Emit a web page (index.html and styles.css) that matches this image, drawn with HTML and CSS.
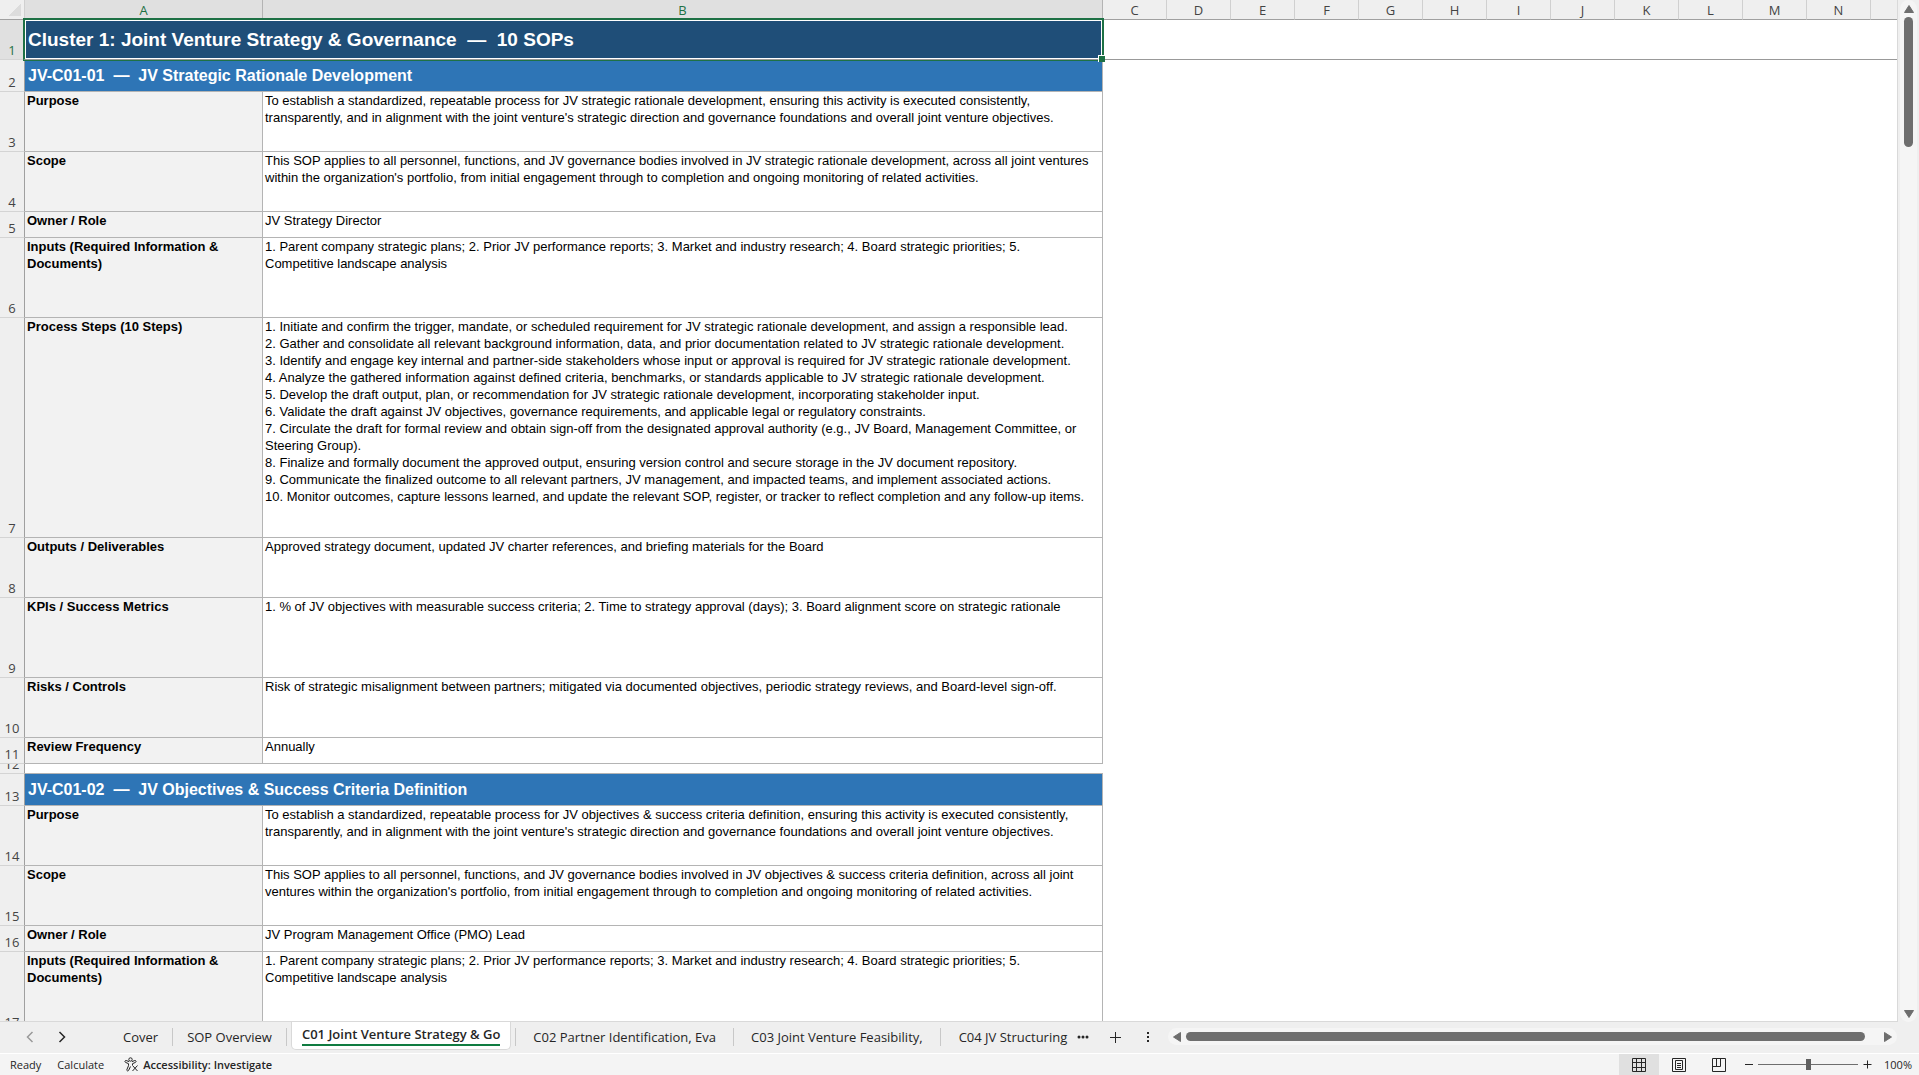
FILE: index.html
```
<!DOCTYPE html>
<html lang="en">

<head>
    <meta charset="UTF-8">
    <title>JV SOP Workbook</title>
    <link rel="stylesheet" href="styles.css">
</head>

<body>
    <main class="workspace">
        <div class="sheet">
            <table class="grid">
                <colgroup>
                    <col class="col-index">
                    <col class="col-a">
                    <col class="col-b">
                    <col class="col-std" span="12">
                    <col>
                </colgroup>
                <thead>
                    <tr>
                        <th class="corner"></th>
                        <th class="selected">A</th>
                        <th class="selected">B</th>
                        <th>C</th>
                        <th>D</th>
                        <th>E</th>
                        <th>F</th>
                        <th>G</th>
                        <th>H</th>
                        <th>I</th>
                        <th>J</th>
                        <th>K</th>
                        <th>L</th>
                        <th>M</th>
                        <th>N</th>
                        <th></th>
                    </tr>
                </thead>
                <tbody>
                    <tr class="row-title">
                        <th class="selected"><div>1</div></th>
                        <td class="cluster" colspan="2">Cluster 1: Joint Venture Strategy &amp; Governance&nbsp; —&nbsp; 10 SOPs</td>
                        <td class="blank" colspan="13"></td>
                    </tr>
                    <tr class="row-sop">
                        <th><div>2</div></th>
                        <td class="sop" colspan="2">JV-C01-01&nbsp; —&nbsp; JV Strategic Rationale Development</td>
                    </tr>
                    <tr class="row-3">
                        <th><div>3</div></th>
                        <td class="label">Purpose</td>
                        <td>To establish a standardized, repeatable process for JV strategic rationale development, ensuring this activity is executed consistently,<br>transparently, and in alignment with the joint venture's strategic direction and governance foundations and overall joint venture objectives.</td>
                    </tr>
                    <tr class="row-3">
                        <th><div>4</div></th>
                        <td class="label">Scope</td>
                        <td>This SOP applies to all personnel, functions, and JV governance bodies involved in JV strategic rationale development, across all joint ventures<br>within the organization's portfolio, from initial engagement through to completion and ongoing monitoring of related activities.</td>
                    </tr>
                    <tr class="row-1">
                        <th><div>5</div></th>
                        <td class="label">Owner / Role</td>
                        <td>JV Strategy Director</td>
                    </tr>
                    <tr class="row-4">
                        <th><div>6</div></th>
                        <td class="label">Inputs (Required Information &amp;<br>Documents)</td>
                        <td>1. Parent company strategic plans; 2. Prior JV performance reports; 3. Market and industry research; 4. Board strategic priorities; 5.<br>Competitive landscape analysis</td>
                    </tr>
                    <tr class="row-steps">
                        <th><div>7</div></th>
                        <td class="label">Process Steps (10 Steps)</td>
                        <td>1. Initiate and confirm the trigger, mandate, or scheduled requirement for JV strategic rationale development, and assign a responsible lead.<br>
                            2. Gather and consolidate all relevant background information, data, and prior documentation related to JV strategic rationale development.<br>
                            3. Identify and engage key internal and partner-side stakeholders whose input or approval is required for JV strategic rationale development.<br>
                            4. Analyze the gathered information against defined criteria, benchmarks, or standards applicable to JV strategic rationale development.<br>
                            5. Develop the draft output, plan, or recommendation for JV strategic rationale development, incorporating stakeholder input.<br>
                            6. Validate the draft against JV objectives, governance requirements, and applicable legal or regulatory constraints.<br>
                            7. Circulate the draft for formal review and obtain sign-off from the designated approval authority (e.g., JV Board, Management Committee, or<br>
                            Steering Group).<br>
                            8. Finalize and formally document the approved output, ensuring version control and secure storage in the JV document repository.<br>
                            9. Communicate the finalized outcome to all relevant partners, JV management, and impacted teams, and implement associated actions.<br>
                            10. Monitor outcomes, capture lessons learned, and update the relevant SOP, register, or tracker to reflect completion and any follow-up items.</td>
                    </tr>
                    <tr class="row-3">
                        <th><div>8</div></th>
                        <td class="label">Outputs / Deliverables</td>
                        <td>Approved strategy document, updated JV charter references, and briefing materials for the Board</td>
                    </tr>
                    <tr class="row-4">
                        <th><div>9</div></th>
                        <td class="label">KPIs / Success Metrics</td>
                        <td>1. % of JV objectives with measurable success criteria; 2. Time to strategy approval (days); 3. Board alignment score on strategic rationale</td>
                    </tr>
                    <tr class="row-3">
                        <th><div>10</div></th>
                        <td class="label">Risks / Controls</td>
                        <td>Risk of strategic misalignment between partners; mitigated via documented objectives, periodic strategy reviews, and Board-level sign-off.</td>
                    </tr>
                    <tr class="row-1">
                        <th><div>11</div></th>
                        <td class="label">Review Frequency</td>
                        <td>Annually</td>
                    </tr>
                    <tr class="row-gap">
                        <th><div>12</div></th>
                        <td class="spacer" colspan="2"></td>
                    </tr>
                    <tr class="row-sop">
                        <th><div>13</div></th>
                        <td class="sop" colspan="2">JV-C01-02&nbsp; —&nbsp; JV Objectives &amp; Success Criteria Definition</td>
                    </tr>
                    <tr class="row-3">
                        <th><div>14</div></th>
                        <td class="label">Purpose</td>
                        <td>To establish a standardized, repeatable process for JV objectives &amp; success criteria definition, ensuring this activity is executed consistently,<br>transparently, and in alignment with the joint venture's strategic direction and governance foundations and overall joint venture objectives.</td>
                    </tr>
                    <tr class="row-3">
                        <th><div>15</div></th>
                        <td class="label">Scope</td>
                        <td>This SOP applies to all personnel, functions, and JV governance bodies involved in JV objectives &amp; success criteria definition, across all joint<br>ventures within the organization's portfolio, from initial engagement through to completion and ongoing monitoring of related activities.</td>
                    </tr>
                    <tr class="row-1">
                        <th><div>16</div></th>
                        <td class="label">Owner / Role</td>
                        <td>JV Program Management Office (PMO) Lead</td>
                    </tr>
                    <tr class="row-4">
                        <th><div>17</div></th>
                        <td class="label">Inputs (Required Information &amp;<br>Documents)</td>
                        <td>1. Parent company strategic plans; 2. Prior JV performance reports; 3. Market and industry research; 4. Board strategic priorities; 5.<br>Competitive landscape analysis</td>
                    </tr>
                </tbody>
            </table>
        </div>
        <div class="scroll scroll-v">
            <button class="arrow" aria-label="Scroll up"><svg width="10" height="8"><path d="M5 0.5 9.5 7.5H0.5z" /></svg></button>
            <div class="thumb"></div>
            <button class="arrow arrow-end" aria-label="Scroll down"><svg width="10" height="8"><path d="M5 7.5 9.5 0.5H0.5z" /></svg></button>
        </div>
    </main>

    <nav class="tabbar">
        <div class="tabs">
            <button class="nav-arrow off" aria-label="Previous sheets"><svg width="8" height="12"><path d="M6.5 1 1.5 6l5 5" /></svg></button>
            <button class="nav-arrow" aria-label="Next sheets"><svg width="8" height="12"><path d="M1.5 1l5 5-5 5" /></svg></button>
            <button class="tab first">Cover</button>
            <button class="tab">SOP Overview</button>
            <button class="tab active"><span>C01 Joint Venture Strategy &amp; Go</span></button>
            <button class="tab wide lined">C02 Partner Identification, Eva</button>
            <button class="tab wide">C03 Joint Venture Feasibility,</button>
            <button class="tab last">C04 JV Structuring</button>
            <button class="more" aria-label="More sheets"><svg width="12" height="4"><circle cx="2" cy="2" r="1.5" /><circle cx="6" cy="2" r="1.5" /><circle cx="10" cy="2" r="1.5" /></svg></button>
            <button class="add" aria-label="New sheet"><svg width="13" height="13"><path d="M6.5 1v11M1 6.5h11" /></svg></button>
            <button class="resize" aria-label="Resize tabs"><svg width="4" height="12"><path d="M1 1h2v2H1zM1 5h2v2H1zM1 9h2v2H1z" /></svg></button>
        </div>
        <div class="scroll scroll-h">
            <button class="arrow" aria-label="Scroll left"><svg width="8" height="10"><path d="M0.5 5 7.5 0.5v9z" /></svg></button>
            <div class="thumb"></div>
            <button class="arrow arrow-end" aria-label="Scroll right"><svg width="8" height="10"><path d="M7.5 5 0.5 0.5v9z" /></svg></button>
        </div>
    </nav>

    <footer class="status">
        <span>Ready</span>
        <span>Calculate</span>
        <button class="access">
            <svg width="15" height="15" viewBox="0 0 15 15">
                <circle cx="6.5" cy="2.5" r="1.7" />
                <path d="M5 4.6 2.2 3.5a1 1 0 0 0-.8 1.8L4.5 6.7v2L2.9 12.6a.9.9 0 0 0 1.7.8L6.5 9.5M8 4.6l2.8-1.1a1 1 0 0 1 .8 1.8L8.5 6.7v1.5M8.5 8.5l5 5.5M13.5 8.5l-5 5.5" />
            </svg>
            Accessibility: Investigate
        </button>
        <div class="views">
            <button class="view on" aria-label="Normal">
                <svg width="14" height="14" viewBox="0 0 14 14"><path d="M.5.5h13v13H.5zM4.5.5v13M9.5.5v13M.5 4.5h13M.5 9.5h13" /></svg>
            </button>
            <button class="view" aria-label="Page Layout">
                <svg width="14" height="14" viewBox="0 0 14 14"><path d="M.5.5h13v13H.5zM3.5 2.5h7v9h-7zM5 5.5h4M5 7.5h4M5 9.5h4" /></svg>
            </button>
            <button class="view" aria-label="Page Break Preview">
                <svg width="14" height="14" viewBox="0 0 14 14"><path d="M.5.5h13v13H.5zM.5 8.5h8M4.5.5v8M8.5.5v8" /></svg>
            </button>
        </div>
        <div class="zoom">
            <button aria-label="Zoom out"><svg width="8" height="9"><path d="M0 4.5h8" /></svg></button>
            <input type="range" min="0" max="200" value="100" aria-label="Zoom">
            <button aria-label="Zoom in"><svg width="9" height="9"><path d="M0.5 4.5h8M4.5 0.5v8" /></svg></button>
            <button class="percent">100%</button>
        </div>
    </footer>
</body>

</html>
```
FILE: styles.css
```
* {
    box-sizing: border-box;
}

body {
    margin: 0;
    height: 100vh;
    display: flex;
    flex-direction: column;
    overflow: hidden;
    background: #efefef;
    color: #262626;
    font-family: "Open Sans", "Noto Sans", sans-serif;
}

button {
    padding: 0;
    border: 0;
    background: none;
    color: inherit;
    font: inherit;
}

svg {
    display: block;
    fill: none;
    stroke: #262626;
}

/* worksheet */
.workspace {
    flex: 1;
    min-height: 0;
    display: flex;
}

.sheet {
    flex: 1;
    min-width: 0;
    overflow: hidden;
    background: #fff;
    border-right: 1px solid #d9d9d9;
    border-bottom: 1px solid #d9d9d9;
}

.grid {
    width: 100%;
    table-layout: fixed;
    border-collapse: separate;
    border-spacing: 0;
}

.col-index {
    width: 25px;
}

.col-a {
    width: 238px;
}

.col-b {
    width: 840px;
}

.col-std {
    width: 64px;
}

.grid th {
    padding: 0;
    background: #efefef;
    color: #444;
    font-size: 13px;
    font-weight: normal;
    line-height: 18px;
}

.grid thead th {
    height: 20px;
    border-right: 1px solid #d0d0d0;
    border-bottom: 1px solid #a0a0a0;
}

.grid thead th:last-child {
    border-right: 0;
}

.grid .corner {
    background: linear-gradient(135deg, #efefef 50%, #dcdcdc 50%) 9px 4px / 12px 12px no-repeat #efefef;
}

.grid tbody th {
    vertical-align: bottom;
    border-right: 1px solid #a0a0a0;
    border-bottom: 1px solid #d4d4d4;
}

.grid th.selected {
    background: #e0e0e0;
    color: #1e7145;
}

.grid thead th.selected {
    border-right-color: #b4b4b4;
}

.grid th div {
    display: flex;
    align-items: flex-end;
    justify-content: center;
    overflow: hidden;
    height: 18px;
}

.grid td {
    padding: 0 2px;
    vertical-align: top;
    border-right: 1px solid #b4b4b4;
    border-bottom: 1px solid #b4b4b4;
    color: #000;
    font-family: "Liberation Sans", Arial, sans-serif;
    font-size: 13px;
    line-height: 17px;
    white-space: nowrap;
}

.grid td.label {
    background: #f2f2f2;
    font-weight: bold;
}

.grid td.cluster {
    position: relative;
    padding: 0 3px;
    vertical-align: middle;
    background: #1f4e78;
    color: #fff;
    font-size: 19px;
    font-weight: bold;
}

/* selection frame and fill handle */
.cluster::before {
    content: "";
    position: absolute;
    top: -2px;
    right: -2px;
    bottom: -1px;
    left: -2px;
    border: 2px solid #1e7145;
    border-bottom: 1px solid #999;
    box-shadow: inset 0 0 0 1px #fff, 0 1px 0 #1e7145;
}

.cluster::after {
    content: "";
    position: absolute;
    right: -3px;
    bottom: -3px;
    width: 6px;
    height: 6px;
    background: #1e7145;
    border-top: 1px solid #fff;
    border-left: 1px solid #fff;
}

.grid td.blank {
    border-right: 0;
    border-bottom-color: #999;
}

.grid td.sop {
    padding: 0 3px;
    vertical-align: middle;
    background: #2e75b6;
    color: #fff;
    font-size: 16px;
    font-weight: bold;
}

.grid td.spacer {
    padding: 0;
    border-right: 0;
}

.row-title {
    height: 40px;
}

.row-sop {
    height: 32px;
}

.row-1 {
    height: 26px;
}

.row-3 {
    height: 60px;
}

.row-4 {
    height: 80px;
}

.row-steps {
    height: 220px;
}

.row-gap {
    height: 10px;
}

.grid .row-gap div {
    height: 9px;
}

/* scrollbars */
.scroll {
    display: flex;
    align-items: center;
    background: #f5f5f5;
    border-radius: 9px;
}

.scroll svg {
    fill: #6e6e6e;
    stroke: #6e6e6e;
    stroke-linejoin: round;
}

.thumb {
    background: #6e6e6e;
    border-radius: 5px;
}

.scroll-v {
    width: 17px;
    margin: 0 2px;
    padding: 5px 0 4px;
    flex-direction: column;
}

.scroll-v .thumb {
    width: 9px;
    height: 130px;
    margin-top: 4px;
}

.scroll-v .arrow-end {
    margin-top: auto;
}

.scroll-h {
    flex: 0 0 38%;
    height: 17px;
    margin-right: 22px;
    padding: 0 5px;
}

.scroll-h .thumb {
    flex: 1;
    height: 9px;
    margin: 0 19px 0 5px;
}

/* sheet tabs */
.tabbar {
    height: 32px;
    display: flex;
    align-items: flex-start;
    justify-content: space-between;
    border-bottom: 1px solid #fff;
}

.tabbar .scroll {
    margin-top: 6px;
}

.tabs {
    height: 30px;
    display: flex;
    align-items: center;
    font-size: 13px;
}

.nav-arrow {
    width: 32px;
    padding-left: 12px;
}

.nav-arrow:first-child {
    margin-left: 14px;
}

.nav-arrow svg {
    stroke-width: 1.5;
}

.nav-arrow.off svg {
    stroke: #999;
}

.tab {
    height: 18px;
    padding: 0 14px;
    border-right: 1px solid #c8c8c8;
    line-height: 18px;
    white-space: nowrap;
}

.tab.first {
    margin-left: 31px;
}

.tab.wide {
    padding: 0 17px;
}

.tab.lined {
    border-left: 1px solid #c8c8c8;
}

.tab.last {
    padding: 0 10px 0 18px;
    border-right: 0;
}

.tab.active {
    align-self: flex-start;
    height: 28px;
    margin: 0 4px;
    padding: 0 10px;
    background: #fff;
    border: 1px solid #d9d9d9;
    border-top: 0;
    border-radius: 0 0 5px 5px;
    font-weight: 600;
}

.tab.active span {
    display: block;
    height: 24px;
    line-height: 24px;
    margin-bottom: 4px;
    border-bottom: 2px solid #107c41;
}

.more svg,
.resize svg {
    fill: #262626;
    stroke: none;
}

.add {
    margin: 0 24px 0 20px;
}

.resize {
    margin-right: 13px;
}

/* status bar */
.status {
    height: 21px;
    padding-left: 10px;
    display: flex;
    align-items: center;
    gap: 16px;
    background: #f4f4f4;
    font-size: 11px;
}

.access {
    display: flex;
    align-items: center;
    gap: 4px;
    margin-left: 4px;
    font-weight: 600;
}

.views {
    display: flex;
    align-self: stretch;
    margin-left: auto;
}

.view {
    width: 40px;
    display: flex;
    align-items: center;
    justify-content: center;
}

.view.on {
    background: #e0e0e0;
}

.zoom {
    display: flex;
    align-items: center;
    gap: 5px;
    margin-right: 7px;
    margin-left: -10px;
}

.zoom input {
    appearance: none;
    width: 100px;
    height: 12px;
    margin: 0;
    background: linear-gradient(#6e6e6e, #6e6e6e) center / 100% 1px no-repeat;
}

.zoom input::-webkit-slider-thumb {
    appearance: none;
    width: 5px;
    height: 11px;
    background: #5f5f5f;
}

.percent {
    margin-left: 7px;
}
```
